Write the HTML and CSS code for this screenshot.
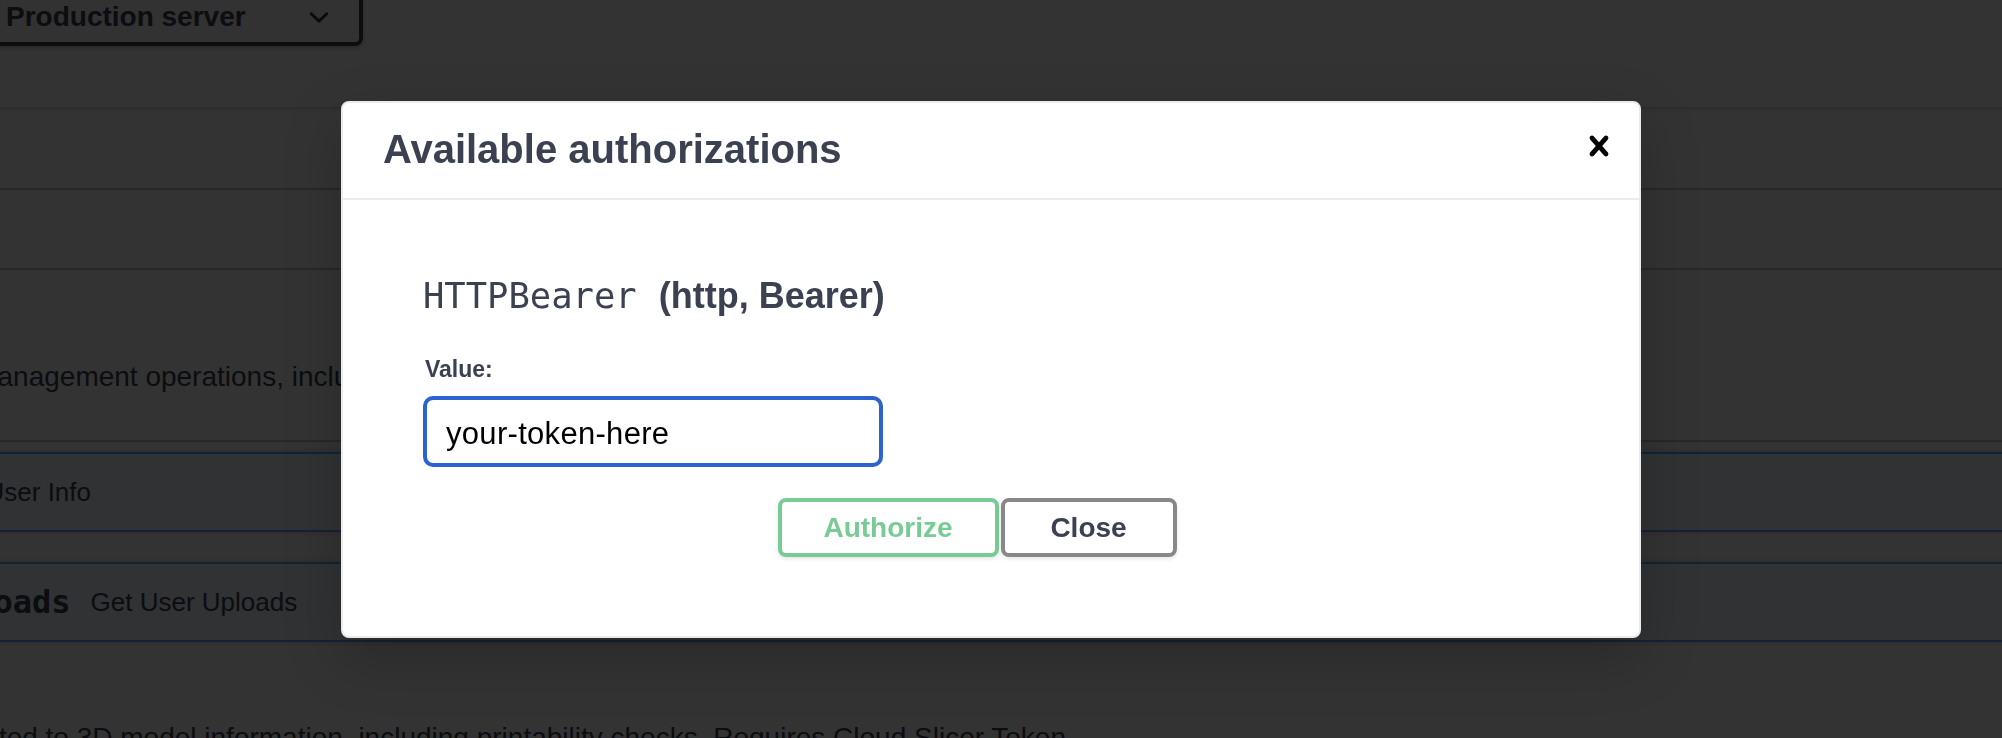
FILE: index.html
```html
<!DOCTYPE html>
<html lang="en">
<head>
<meta charset="utf-8">
<title>Swagger UI - Available authorizations</title>
<link rel="stylesheet" href="styles.css">
</head>
<body>
<div class="page">
  <div class="scheme">
    <div class="select">
      <span>Production server</span>
      <svg class="chevron" viewBox="0 0 20 20"><path d="M13.418 7.859a.695.695 0 01.978 0 .68.68 0 010 .969l-3.908 3.83a.697.697 0 01-.979 0l-3.908-3.83a.68.68 0 010-.969.695.695 0 01.978 0L10 11l3.418-3.141z"/></svg>
    </div>
  </div>

  <div class="tag t1"><h3>Health</h3></div>
  <div class="tag t2"><h3>Auth</h3></div>
  <div class="tag t3"><h3>User Account</h3><small>User management operations, including profile details, uploads and account settings.</small></div>

  <div class="opblocks">
    <div class="opblock">
      <div class="summary"><span class="method">GET</span><span class="path">/users/me</span><span class="desc">Get User Info</span></div>
    </div>
    <div class="opblock">
      <div class="summary"><span class="method">GET</span><span class="path">/users/me/uploads</span><span class="desc">Get User Uploads</span></div>
    </div>
  </div>

  <div class="tag t4"><h3>3D Models</h3><small>Services related to 3D model information, including printability checks. Requires Cloud Slicer Token</small></div>
</div>

<div class="backdrop"></div>

<div class="modal" role="dialog">
  <div class="modal-header">
    <h3>Available authorizations</h3>
    <button class="close-modal" aria-label="Close">
      <svg viewBox="0 0 20 20"><path d="M14.348 14.849c-.469.469-1.229.469-1.697 0L10 11.819l-2.651 3.029c-.469.469-1.229.469-1.697 0-.469-.469-.469-1.229 0-1.697l2.758-3.15-2.759-3.152c-.469-.469-.469-1.228 0-1.697.469-.469 1.228-.469 1.697 0L10 8.183l2.651-3.031c.469-.469 1.228-.469 1.697 0 .469.469.469 1.229 0 1.697l-2.758 3.152 2.758 3.15c.469.469.469 1.229 0 1.698z"/></svg>
    </button>
  </div>
  <div class="modal-body">
    <h4 class="auth-title"><code>HTTPBearer</code>&nbsp;(http, Bearer)</h4>
    <div class="label">Value:</div>
    <div class="token-input" role="textbox">your-token-here</div>
    <div class="btns">
      <button class="btn authorize">Authorize</button>
      <button class="btn close">Close</button>
    </div>
  </div>
</div>
</body>
</html>
```

FILE: styles.css
```css
* { box-sizing: border-box; margin: 0; padding: 0; }

html, body {
  width: 2002px;
  height: 738px;
  overflow: hidden;
}

body {
  background: #fff;
  font-family: "Liberation Sans", Arial, sans-serif;
  color: #3b4151;
  position: relative;
}

/* ---------- underlying swagger page ---------- */
.page {
  margin-left: -449px;
  width: 2700px;
}

.scheme {
  display: flex;
  align-items: flex-start;
  height: 107px;
  padding-left: 431px;
  background: #fff;
  box-shadow: 0 2px 4px 0 rgba(0, 0, 0, .15);
  position: relative;
}

.select {
  margin-top: -24px;
  width: 381px;
  height: 70px;
  padding: 12px 20px 0 20px;
  display: flex;
  align-items: center;
  justify-content: space-between;
  border: 4px solid #41444e;
  border-radius: 8px;
  background: #f7f7f7;
  box-shadow: 0 2px 4px 0 rgba(0, 0, 0, .25);
  font-size: 28px;
  line-height: 32px;
  font-weight: 700;
  color: #3b4151;
}

.chevron { width: 40px; height: 40px; fill: #333; }

.tag {
  display: flex;
  align-items: center;
  padding: 0 40px 0 20px;
  border-bottom: 2px solid rgba(59, 65, 81, .3);
  white-space: nowrap;
}

.tag h3 {
  font-size: 48px;
  line-height: 56px;
  font-weight: 700;
  margin-right: 26px;
}

.tag small {
  font-size: 28px;
  line-height: 32px;
}

.t1 { height: 83px; }
.t2 { height: 80px; }
.t3 { height: 172px; align-items: baseline; padding-top: 72px; }
.t4 { height: 82px; margin-top: 56px; border-bottom-color: transparent; }

.opblocks {
  display: flex;
  flex-direction: column;
  gap: 30px;
  padding-top: 10px;
}

.opblock {
  border: 2px solid #61affe;
  border-radius: 8px;
  background: rgba(97, 175, 254, .1);
  box-shadow: 0 0 6px rgba(0, 0, 0, .19);
}

.summary {
  display: flex;
  align-items: center;
  padding: 10px;
  white-space: nowrap;
}

.method {
  min-width: 160px;
  padding: 12px 0;
  border-radius: 6px;
  background: #61affe;
  color: #fff;
  font-size: 28px;
  line-height: 32px;
  font-weight: 700;
  text-align: center;
}

.path {
  padding: 0 20px;
  font-family: "DejaVu Sans Mono", monospace;
  font-size: 32px;
  line-height: 38px;
  font-weight: 700;
  color: #3b4151;
}

.desc {
  font-size: 26px;
  line-height: 30px;
  color: #3b4151;
}

.backdrop {
  position: fixed;
  inset: 0;
  z-index: 10;
  background: rgba(0, 0, 0, .8);
}

/* ---------- modal ---------- */
.modal {
  position: absolute;
  z-index: 20;
  left: 341px;
  top: 101px;
  width: 1300px;
  background: #fff;
  border: 2px solid #ebebeb;
  border-radius: 8px;
  box-shadow: 0 20px 60px 0 rgba(0, 0, 0, .2);
}

.modal-header {
  display: flex;
  align-items: center;
  justify-content: space-between;
  padding: 22px 20px 25px 40px;
  border-bottom: 2px solid #ebebeb;
}

.modal-header h3 {
  font-size: 40px;
  line-height: 48px;
  font-weight: 700;
  color: #3b4151;
}

.close-modal {
  width: 40px;
  height: 40px;
  margin-top: -6px;
  border: 0;
  background: none;
  display: flex;
}

.close-modal svg { width: 40px; height: 40px; fill: #000; }

.modal-body {
  padding: 74px 80px 79px;
}

.auth-title {
  font-size: 36px;
  line-height: 44px;
  font-weight: 700;
  color: #3b4151;
}

.auth-title code {
  font-family: "DejaVu Sans Mono", monospace;
  font-size: 35.5px;
  font-weight: 400;
  margin-right: 12px;
}

.label {
  margin-top: 37px;
  padding-left: 2px;
  font-size: 23px;
  line-height: 28px;
  font-weight: 700;
  color: #3b4151;
}

.token-input {
  margin-top: 13px;
  width: 460px;
  height: 71px;
  padding: 4px 19px 0;
  display: flex;
  align-items: center;
  border: 4px solid #2c63cf;
  border-radius: 10px;
  background: #fff;
  font-size: 31px;
  letter-spacing: .3px;
  color: #000;
}

.btns {
  margin-top: 31px;
  display: flex;
  justify-content: center;
  gap: 2px;
}

.btn {
  height: 59px;
  border: 4px solid #888;
  border-radius: 8px;
  background: #fff;
  font-family: "Liberation Sans", Arial, sans-serif;
  font-size: 28px;
  line-height: 32px;
  font-weight: 700;
  color: #3b4151;
  box-shadow: 0 2px 4px rgba(0, 0, 0, .1);
}

.btn.authorize {
  width: 221px;
  border-color: #78cb95;
  color: #78cb95;
}

.btn.close {
  width: 176px;
  margin-right: 28px;
}
```
